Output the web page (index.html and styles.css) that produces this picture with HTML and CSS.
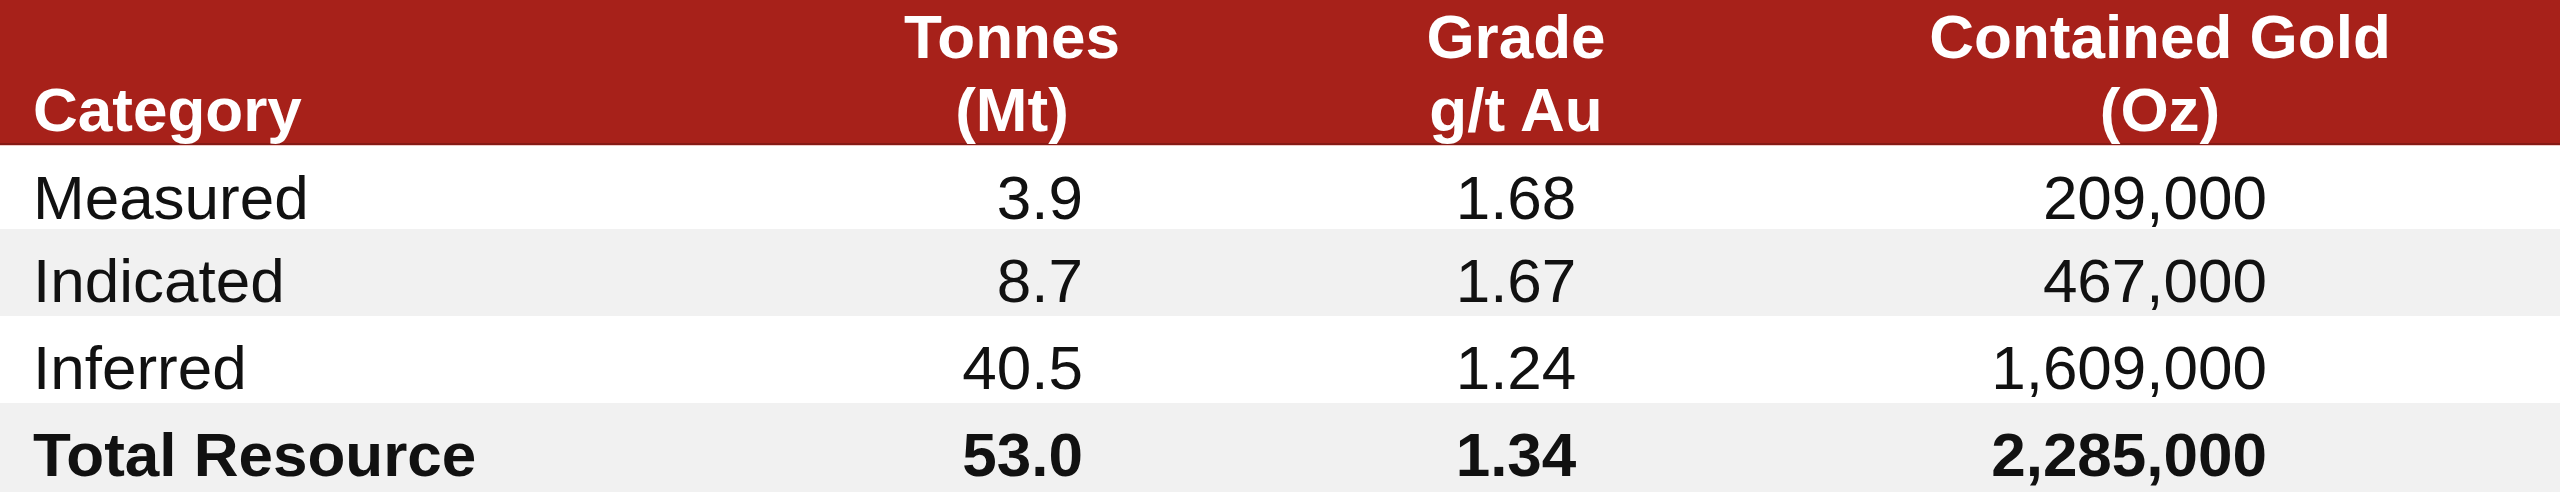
FILE: index.html
```html
<!DOCTYPE html>
<html lang="en">
<head>
    <meta charset="UTF-8">
    <meta name="viewport" content="width=device-width, initial-scale=1.0">
    <title>Mineral Resource</title>
    <link rel="stylesheet" href="styles.css">
</head>
<body>
    <div class="resource-table">
        <div class="row head">
            <div class="cell left">Category</div>
            <div class="cell center">Tonnes<br>(Mt)</div>
            <div class="cell center">Grade<br>g/t Au</div>
            <div class="cell center">Contained Gold<br>(Oz)</div>
            <div class="cell"></div>
        </div>

        <div class="row first">
            <div class="cell left">Measured</div>
            <div class="cell right tonnes">3.9</div>
            <div class="cell center">1.68</div>
            <div class="cell right gold">209,000</div>
            <div class="cell"></div>
        </div>

        <div class="row alt">
            <div class="cell left">Indicated</div>
            <div class="cell right tonnes">8.7</div>
            <div class="cell center">1.67</div>
            <div class="cell right gold">467,000</div>
            <div class="cell"></div>
        </div>

        <div class="row">
            <div class="cell left">Inferred</div>
            <div class="cell right tonnes">40.5</div>
            <div class="cell center">1.24</div>
            <div class="cell right gold">1,609,000</div>
            <div class="cell"></div>
        </div>

        <div class="row alt total">
            <div class="cell left">Total Resource</div>
            <div class="cell right tonnes">53.0</div>
            <div class="cell center">1.34</div>
            <div class="cell right gold">2,285,000</div>
            <div class="cell"></div>
        </div>
    </div>
</body>
</html>
```

FILE: styles.css
```css
* {
    box-sizing: border-box;
    margin: 0;
    padding: 0;
}
body {
    font-family: "Liberation Sans", Arial, sans-serif;
    background: #fff;
    color: #111;
    overflow: hidden;
}
.resource-table {
    width: 2560px;
}
.row {
    display: grid;
    grid-template-columns: 760px 504px 504px 784px 1fr;
    height: 87px;
    font-size: 62px;
    line-height: 62px;
}
.row .cell {
    padding-top: 21px;
    white-space: nowrap;
}
.row.alt {
    background: #f1f1f1;
}
.row.first {
    height: 84px;
    border-top: 1px solid #efc9c6;
}
.row.total {
    height: 90px;
    font-weight: bold;
}
.row.head {
    height: 145px;
    background: #a7211a;
    box-shadow: inset 0 -2px 0 #851a15;
    color: #fff;
    font-weight: bold;
    line-height: 73px;
    align-items: end;
}
.row.head .cell {
    padding-top: 0;
}
.cell.left {
    padding-left: 33px;
    text-align: left;
}
.cell.center {
    text-align: center;
}
.cell.right {
    text-align: right;
}
.cell.tonnes {
    padding-right: 181px;
}
.cell.gold {
    padding-right: 285px;
}
```
